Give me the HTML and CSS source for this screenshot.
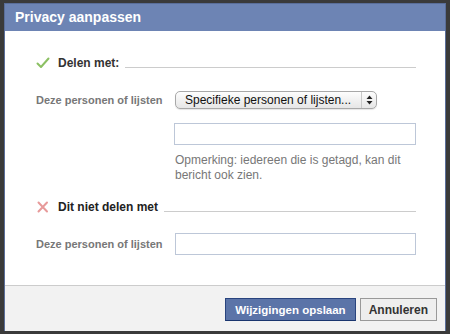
FILE: index.html
```html
<!DOCTYPE html>
<html lang="nl">
<head>
    <meta charset="UTF-8">
    <title>Privacy aanpassen</title>
    <link rel="stylesheet" href="styles.css">
</head>
<body>
    <div class="dialog">
        <div class="dialog-title">Privacy aanpassen</div>
        <div class="dialog-body">
            <!-- share with -->
            <div class="section-head">
                <svg class="icon" width="14" height="12" viewBox="0 0 14 12">
                    <path d="M1.5 6.5 L5 10 L12.5 1.5" fill="none" stroke="#8cc063" stroke-width="2" stroke-linecap="round" stroke-linejoin="round"/>
                </svg>
                <span class="section-title">Delen met:</span>
                <span class="rule"></span>
            </div>
            <div class="row">
                <span class="label">Deze personen of lijsten</span>
                <div class="fake-select">
                    <span>Specifieke personen of lijsten...</span>
                    <span class="arrows">
                        <svg width="7" height="10" viewBox="0 0 7 10">
                            <path d="M3.5 0.5 L6.5 4 L0.5 4 Z M3.5 9.5 L6.5 6 L0.5 6 Z" fill="#222"/>
                        </svg>
                    </span>
                </div>
            </div>
            <div class="row indent">
                <div class="text-input"></div>
            </div>
            <p class="note">Opmerking: iedereen die is getagd, kan dit bericht ook zien.</p>

            <!-- don't share with -->
            <div class="section-head second">
                <svg class="icon" width="14" height="12" viewBox="0 0 14 12">
                    <path d="M2.5 1.5 L11 10.5 M11 1.5 L2.5 10.5" fill="none" stroke="#e79a9a" stroke-width="2" stroke-linecap="round"/>
                </svg>
                <span class="section-title plain">Dit niet delen met</span>
                <span class="rule"></span>
            </div>
            <div class="row row-last">
                <span class="label">Deze personen of lijsten</span>
                <div class="text-input"></div>
            </div>
        </div>
        <div class="dialog-footer">
            <button class="btn btn-primary">Wijzigingen opslaan</button>
            <button class="btn">Annuleren</button>
        </div>
    </div>
</body>
</html>
```

FILE: styles.css
```css
body {
    margin: 0;
    background-color: #3a3a3a;
    font-family: "Liberation Sans", Arial, sans-serif;
}

.dialog {
    margin: 3px 4px 0 4px;
    background-color: #fff;
    border: 1px solid #5a6e9a;
    border-bottom: none;
}

.dialog-title {
    height: 27px;
    line-height: 27px;
    padding-left: 10px;
    background-color: #6d84b4;
    color: #fff;
    font-size: 14px;
    font-weight: bold;
}

.dialog-body {
    padding: 25px 29px 18px 31px;
    height: 211px;
}

.section-head {
    display: flex;
    align-items: center;
    height: 14px;
}

.section-head .icon {
    margin-right: 8px;
}

.section-title {
    font-size: 12px;
    font-weight: bold;
    color: #333;
    margin-right: 6px;
}

.section-title.plain {
    color: #222;
}

.rule {
    flex: 1;
    height: 1px;
    margin-top: 8px;
    background-color: #ccc;
}

.second {
    margin-top: 17px;
}

.row {
    display: flex;
    align-items: center;
    margin-top: 21px;
}

.row.indent {
    margin-top: 14px;
    padding-left: 138px;
}

.row.row-last {
    margin-top: 19px;
}

.label {
    width: 139px;
    font-size: 11px;
    font-weight: bold;
    color: #777;
}

.fake-select {
    display: flex;
    align-items: center;
    width: 200px;
    height: 16px;
    border: 1px solid #a8a8a8;
    border-radius: 5px;
    background: linear-gradient(#fdfdfd, #e6e6e6);
    font-size: 12px;
    color: #111;
    box-shadow: 0 1px 1px rgba(0, 0, 0, 0.1);
}

.fake-select span:first-child {
    flex: 1;
    padding-left: 9px;
}

.arrows {
    width: 14px;
    height: 16px;
    display: flex;
    align-items: center;
    justify-content: center;
    border-left: 1px solid #c8c8c8;
}

.text-input {
    width: 240px;
    height: 20px;
    border: 1px solid #bdc7d8;
}

.note {
    margin: 8px 0 0 139px;
    font-size: 12px;
    line-height: 15px;
    color: #777;
    width: 245px;
}

.dialog-footer {
    display: flex;
    justify-content: flex-end;
    gap: 4px;
    padding: 12px 8px 9px 0;
    height: 24px;
    background-color: #f2f2f2;
    border-top: 1px solid #ccc;
}

.btn {
    font-family: "Liberation Sans", Arial, sans-serif;
    font-size: 12px;
    font-weight: bold;
    padding: 0 8px;
    height: 23px;
    border: 1px solid #999;
    background-color: #eee;
    color: #333;
}

.btn-primary {
    padding: 0 9px;
    background-color: #5b74a8;
    border-color: #29447e #29447e #1a356e;
    color: #fff;
    font-size: 11.5px;
}
```
